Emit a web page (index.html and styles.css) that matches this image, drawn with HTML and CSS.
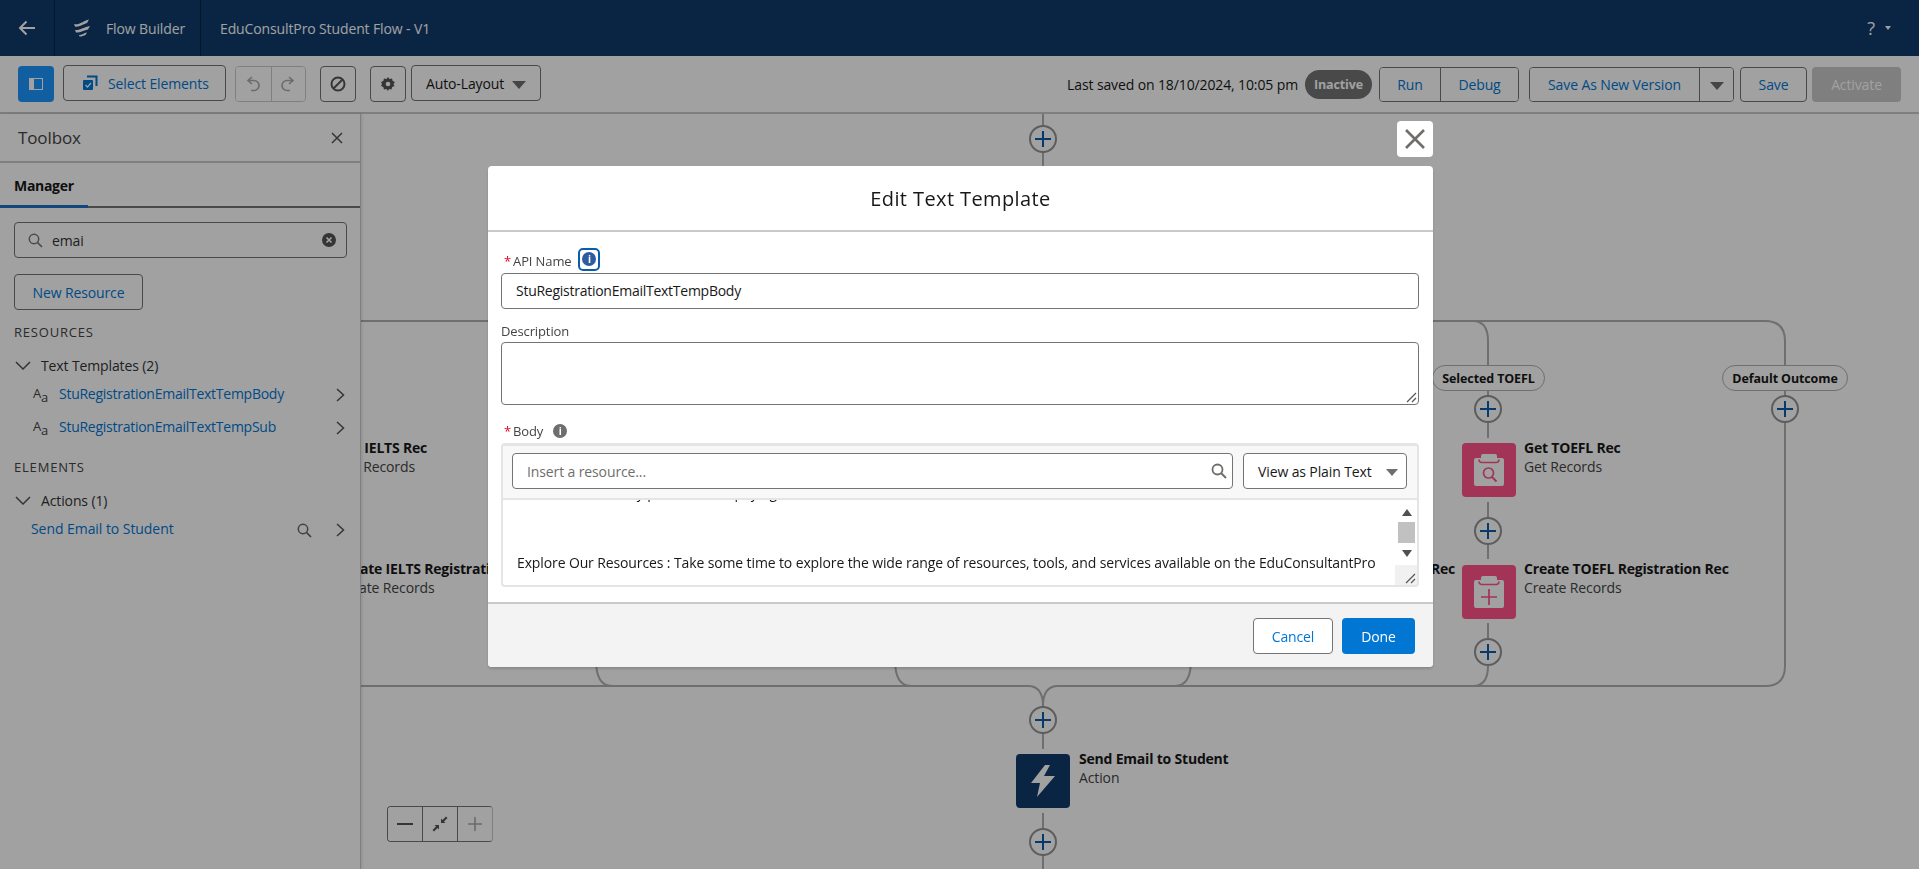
FILE: index.html
```html
<!DOCTYPE html>
<html lang="en">
<head>
    <meta charset="UTF-8">
    <title>Flow Builder</title>
    <link rel="stylesheet" href="styles.css">
</head>
<body>

    <!-- Top bar -->
    <header class="topbar">
        <div class="topbar-back">
            <svg width="18" height="16" viewBox="0 0 18 16"><path d="M17 8H2M8.500 1.500 2 8l6.500 6.500" fill="none" stroke="#fff" stroke-width="2"/></svg>
        </div>
        <div class="topbar-app">
            <svg width="18" height="18" viewBox="0 0 18 18"><path d="M1 5C6 6.500 10 2 16 0.500L14 4C10 5 6 8.500 2 7.500ZM2 11C7 11.500 11 8 17 7L15 10.500C11 11 7 14 3 13.500ZM6 16C9 16 11 14 14 13.500L12.500 16C10.500 16.500 8 18 6.500 17.500Z" fill="#fff"/></svg>
            <span>Flow Builder</span>
        </div>
        <div class="topbar-title">EduConsultPro Student Flow - V1</div>
        <div class="topbar-help">
            <span class="help-mark">?</span>
            <span class="help-caret"></span>
        </div>
    </header>

    <!-- Toolbar -->
    <div class="toolbar">
        <button class="icon-btn toggle-btn">
            <svg width="14" height="12" viewBox="0 0 14 12"><rect x="0.500" y="0.500" width="13" height="11" fill="none" stroke="#fff"/><rect x="1" y="1" width="4" height="10" fill="#fff"/></svg>
        </button>
        <button class="btn select-btn">
            <svg width="16" height="16" viewBox="0 0 16 16"><path d="M5 1.500h9.500V11" fill="none" stroke="#0176d3" stroke-width="2"/><rect x="1" y="5" width="10" height="10" rx="1" fill="#0176d3"/><path d="M3.500 10l2 2 3.500-4" fill="none" stroke="#fff" stroke-width="1.200"/></svg>
            Select Elements
        </button>
        <div class="btn-group undo-group">
            <button class="icon-btn">
                <svg width="14" height="16" viewBox="0 0 14 16"><path d="M6 1 2 4.500 6 8M2 4.500h6a4.500 4.500 0 0 1 0 10H5" fill="none" stroke="#aaa" stroke-width="1.600"/></svg>
            </button>
            <button class="icon-btn">
                <svg width="14" height="16" viewBox="0 0 14 16"><path d="M8 1l4 3.500L8 8M12 4.500H6a4.500 4.500 0 0 0 0 10h3" fill="none" stroke="#aaa" stroke-width="1.600"/></svg>
            </button>
        </div>
        <button class="icon-btn single-btn ban-btn">
            <svg width="16" height="16" viewBox="0 0 16 16"><circle cx="8" cy="8" r="6.500" fill="none" stroke="#555" stroke-width="2"/><path d="M12.500 3.500l-9 9" stroke="#555" stroke-width="2"/></svg>
        </button>
        <button class="icon-btn single-btn gear-btn">
            <svg width="16" height="16" viewBox="0 0 16 16"><path d="M8 1l1.500 2 2.500-.6.700 2.500 2.300 1.100L13.500 8l1 2-2.300 1.100-.7 2.500-2.500-.6L8 15l-1.500-2-2.500.6-.7-2.500L1 10l1-2-1-2 2.300-1.100.7-2.500 2.500.6Z" fill="#555"/><circle cx="8" cy="8" r="2.300" fill="#fff"/></svg>
        </button>
        <button class="btn layout-btn">Auto-Layout <span class="caret"></span></button>

        <div class="toolbar-right">
            <span class="saved-text">Last saved on 18/10/2024, 10:05 pm</span>
            <span class="status-pill">Inactive</span>
            <div class="btn-group run-group">
                <button class="btn-link run-btn">Run</button>
                <button class="btn-link debug-btn">Debug</button>
            </div>
            <div class="btn-group version-group">
                <button class="btn-link version-btn">Save As New Version</button>
                <button class="btn-link version-caret"><span class="caret"></span></button>
            </div>
            <button class="btn-link single-link save-btn">Save</button>
            <button class="activate-btn">Activate</button>
        </div>
    </div>

    <div class="workspace">
        <!-- Toolbox -->
        <aside class="sidebar">
            <div class="sidebar-head">
                <span>Toolbox</span>
                <svg width="12" height="12" viewBox="0 0 12 12"><path d="M1 1l10 10M11 1 1 11" stroke="#555" stroke-width="1.500"/></svg>
            </div>
            <div class="tabs"><span class="tab">Manager</span></div>
            <div class="search-box">
                <svg width="15" height="15" viewBox="0 0 15 15"><circle cx="6" cy="6" r="4.700" fill="none" stroke="#777" stroke-width="1.500"/><path d="M9.500 9.500 14 14" stroke="#777" stroke-width="1.700"/></svg>
                <span class="search-text">emai</span>
                <svg class="search-clear" width="14" height="14" viewBox="0 0 14 14"><circle cx="7" cy="7" r="7" fill="#555"/><path d="M4.500 4.500l5 5M9.500 4.500l-5 5" stroke="#fff" stroke-width="1.700"/></svg>
            </div>
            <button class="btn new-btn">New Resource</button>

            <div class="section-title">RESOURCES</div>
            <div class="tree-head">
                <svg width="16" height="9" viewBox="0 0 16 9"><path d="M1 1l7 7 7-7" fill="none" stroke="#555" stroke-width="1.500"/></svg>
                Text Templates (2)
            </div>
            <div class="tree-item">
                <span class="type-icon">A<small>a</small></span>
                <a>StuRegistrationEmailTextTempBody</a>
                <svg class="chev" width="9" height="14" viewBox="0 0 9 14"><path d="M1 1l6.500 6L1 13" fill="none" stroke="#555" stroke-width="1.500"/></svg>
            </div>
            <div class="tree-item">
                <span class="type-icon">A<small>a</small></span>
                <a>StuRegistrationEmailTextTempSub</a>
                <svg class="chev" width="9" height="14" viewBox="0 0 9 14"><path d="M1 1l6.500 6L1 13" fill="none" stroke="#555" stroke-width="1.500"/></svg>
            </div>

            <div class="section-title elements-title">ELEMENTS</div>
            <div class="tree-head">
                <svg width="16" height="9" viewBox="0 0 16 9"><path d="M1 1l7 7 7-7" fill="none" stroke="#555" stroke-width="1.500"/></svg>
                Actions (1)
            </div>
            <div class="tree-item action-item">
                <a>Send Email to Student</a>
                <svg class="item-search" width="15" height="15" viewBox="0 0 15 15"><circle cx="6" cy="6" r="4.700" fill="none" stroke="#666" stroke-width="1.500"/><path d="M9.500 9.500 14 14" stroke="#666" stroke-width="1.700"/></svg>
                <svg class="chev" width="9" height="14" viewBox="0 0 9 14"><path d="M1 1l6.500 6L1 13" fill="none" stroke="#555" stroke-width="1.500"/></svg>
            </div>
        </aside>

        <!-- Flow canvas -->
        <main class="canvas">
            <div class="flow-layer">
                <svg class="flow-lines" width="1919" height="869" viewBox="0 0 1919 869">
                    <g fill="none" stroke="#b0b0b0" stroke-width="2">
                        <path d="M1043 113V170"/>
                        <path d="M361 321H1765Q1785 321 1785 341V666Q1785 686 1765 686H1058Q1043 686 1043 706V749"/>
                        <path d="M361 686H1028Q1043 686 1043 706"/>
                        <path d="M1473 321Q1488 321 1488 341V438M1488 502V559M1488 623V666Q1488 686 1473 686"/>
                        <path d="M596 660Q596 686 612 686M895 660Q895 686 911 686M1191 660Q1191 686 1175 686"/>
                        <path d="M1043 813V869"/>
                    </g>
                    <g class="plus-btns">
                        <g transform="translate(1043 139)"><circle r="13"/><path d="M-8 0H8M0-8V8"/></g>
                        <g transform="translate(1488 409)"><circle r="13"/><path d="M-8 0H8M0-8V8"/></g>
                        <g transform="translate(1785 409)"><circle r="13"/><path d="M-8 0H8M0-8V8"/></g>
                        <g transform="translate(1488 531)"><circle r="13"/><path d="M-8 0H8M0-8V8"/></g>
                        <g transform="translate(1488 652)"><circle r="13"/><path d="M-8 0H8M0-8V8"/></g>
                        <g transform="translate(1043 720)"><circle r="13"/><path d="M-8 0H8M0-8V8"/></g>
                        <g transform="translate(1043 842)"><circle r="13"/><path d="M-8 0H8M0-8V8"/></g>
                    </g>
                </svg>

                <span class="outcome outcome-toefl">Selected TOEFL</span>
                <span class="outcome outcome-default">Default Outcome</span>

                <div class="node-text text-get-ielts"><b>Get IELTS Rec</b><span>Get Records</span></div>
                <div class="node-text text-create-ielts"><b>Create IELTS Registration Rec</b><span>Create Records</span></div>
                <div class="node-text text-create-mid"><b>Rec</b></div>

                <div class="node-icon pink icon-get-toefl">
                    <svg width="30" height="32" viewBox="0 0 30 32"><path d="M2 4h5V2a2 2 0 0 1 2-2h12a2 2 0 0 1 2 2v2h5a2 2 0 0 1 2 2v24a2 2 0 0 1-2 2H2a2 2 0 0 1-2-2V6a2 2 0 0 1 2-2Z" fill="#fff"/><path d="M5 5.500c0 2 1 3 3 3h14c2 0 3-1 3-3" fill="none" stroke="#ff538a" stroke-width="1.500"/><circle cx="14.500" cy="19" r="5" fill="none" stroke="#ff538a" stroke-width="1.700"/><path d="M18 23l4.500 4.500" stroke="#ff538a" stroke-width="2"/></svg>
                </div>
                <div class="node-text text-get-toefl"><b>Get TOEFL Rec</b><span>Get Records</span></div>

                <div class="node-icon pink icon-create-toefl">
                    <svg width="30" height="32" viewBox="0 0 30 32"><path d="M2 4h5V2a2 2 0 0 1 2-2h12a2 2 0 0 1 2 2v2h5a2 2 0 0 1 2 2v24a2 2 0 0 1-2 2H2a2 2 0 0 1-2-2V6a2 2 0 0 1 2-2Z" fill="#fff"/><path d="M5 5.500c0 2 1 3 3 3h14c2 0 3-1 3-3" fill="none" stroke="#ff538a" stroke-width="1.500"/><path d="M15 13v16M7 21h16" stroke="#ff538a" stroke-width="1.700"/></svg>
                </div>
                <div class="node-text text-create-toefl"><b>Create TOEFL Registration Rec</b><span>Create Records</span></div>

                <div class="node-icon navy icon-action">
                    <svg width="24" height="32" viewBox="0 0 24 32"><path d="M14 0 0 18h9L6 32l18-21H13l6-11Z" fill="#fff"/></svg>
                </div>
                <div class="node-text text-action"><b>Send Email to Student</b><span>Action</span></div>
            </div>

            <div class="zoom-controls">
                <button>
                    <svg width="16" height="2" viewBox="0 0 16 2"><path d="M0 1h16" stroke="#555" stroke-width="2"/></svg>
                </button>
                <button>
                    <svg width="16" height="16" viewBox="0 0 16 16"><path d="M9 7V2.500L10.500 4 14 .5 15.500 2 12 5.500 13.500 7ZM7 9v4.500L5.500 12 2 15.500.5 14 4 10.500 2.500 9Z" fill="#555"/></svg>
                </button>
                <button class="zoom-off">
                    <svg width="14" height="14" viewBox="0 0 14 14"><path d="M0 7h14M7 0v14" stroke="#aaa" stroke-width="1.600"/></svg>
                </button>
            </div>
        </main>
    </div>

    <!-- Dialog -->
    <div class="backdrop">
        <div class="modal">
            <button class="modal-close">
                <svg width="20" height="20" viewBox="0 0 20 20"><path d="M1 1l18 18M19 1 1 19" stroke="#706e6b" stroke-width="2.600"/></svg>
            </button>
            <div class="modal-head">Edit Text Template</div>
            <div class="modal-body">
                <div class="field-label api-label">
                    <span><i>*</i>API Name</span>
                    <span class="info-focus"><span class="info-dot info-blue">i</span></span>
                </div>
                <div class="text-input name-input">StuRegistrationEmailTextTempBody</div>

                <div class="field-label desc-label">Description</div>
                <div class="text-input desc-input">
                    <svg class="grip" width="11" height="11" viewBox="0 0 11 11"><path d="M1 10 10 1M6 10l4-4" stroke="#555" stroke-width="1.200"/></svg>
                </div>

                <div class="field-label body-label">
                    <span><i>*</i>Body</span>
                    <span class="info-dot">i</span>
                </div>
                <div class="editor">
                    <div class="editor-bar">
                        <div class="text-input resource-input">
                            <span>Insert a resource...</span>
                            <svg width="16" height="16" viewBox="0 0 16 16"><circle cx="6.500" cy="6.500" r="5" fill="none" stroke="#706e6b" stroke-width="1.800"/><path d="M10 10l5 5" stroke="#706e6b" stroke-width="2"/></svg>
                        </div>
                        <div class="text-input view-select">View as Plain Text <span class="caret"></span></div>
                    </div>
                    <div class="editor-main">
                        <div class="editor-text">
                            <p class="cut-line">Read the notes fully proceed with paying</p>
                            <p class="next-line">Explore Our Resources : Take some time to explore the wide range of resources, tools, and services available on the EduConsultantPro</p>
                        </div>
                        <div class="scroll">
                            <div class="scroll-arrow up"></div>
                            <div class="scroll-thumb"></div>
                            <div class="scroll-arrow down"></div>
                            <div class="scroll-corner">
                                <svg width="11" height="11" viewBox="0 0 11 11"><path d="M1 10 10 1M6 10l4-4" stroke="#555" stroke-width="1.200"/></svg>
                            </div>
                        </div>
                    </div>
                </div>
            </div>
            <div class="modal-foot">
                <button class="cancel-btn">Cancel</button>
                <button class="done-btn">Done</button>
            </div>
        </div>
    </div>

</body>
</html>
```

FILE: styles.css
```css
* {
    box-sizing: border-box;
}

html, body {
    height: 100%;
}

body {
    margin: 0;
    background: #fff;
    color: #181818;
    font-family: "Open Sans", "Noto Sans", sans-serif;
    font-size: 14px;
    letter-spacing: -0.12px;
    overflow: hidden;
}

button {
    font: inherit;
    letter-spacing: inherit;
    background: #fff;
    cursor: pointer;
    padding: 0;
}

svg {
    display: block;
    flex: none;
}

/* Top bar */
.topbar {
    display: flex;
    align-items: center;
    height: 56px;
    background: #103b6d;
    color: #fff;
}

.topbar-back {
    display: flex;
    align-items: center;
    width: 55px;
    height: 100%;
    padding-left: 18px;
    border-right: 1px solid #04234a;
}

.topbar-app {
    display: flex;
    align-items: center;
    gap: 15px;
    width: 146px;
    height: 100%;
    padding-left: 18px;
    border-right: 1px solid #04234a;
}

.topbar-title {
    padding-left: 19px;
}

.topbar-help {
    display: flex;
    align-items: center;
    gap: 10px;
    margin-left: auto;
    padding-right: 28px;
}

.help-mark {
    font-size: 18px;
}

.help-caret {
    border-left: 3px solid transparent;
    border-right: 3px solid transparent;
    border-top: 4px solid #fff;
}

/* Toolbar */
.toolbar {
    display: flex;
    align-items: center;
    height: 58px;
    padding: 0 18px;
    border-bottom: 2px solid #c9c9c9;
}

.btn, .icon-btn.single-btn {
    height: 36px;
    border: 1px solid #747474;
    border-radius: 4px;
}

.btn {
    display: flex;
    align-items: center;
    color: #0176d3;
}

.icon-btn {
    display: flex;
    align-items: center;
    justify-content: center;
    width: 36px;
    height: 36px;
}

.toggle-btn {
    border: none;
    border-radius: 4px;
    background: #1b96ff;
}

.select-btn {
    gap: 10px;
    width: 163px;
    margin: 0 0 2px 9px;
    padding-left: 18px;
}

.btn-group {
    display: flex;
    border: 1px solid #747474;
    border-radius: 4px;
    overflow: hidden;
}

.btn-group button {
    border: none;
    height: 100%;
}

.undo-group {
    width: 71px;
    height: 36px;
    margin-left: 9px;
    border-color: #c9c9c9;
}

.undo-group .icon-btn {
    width: 50%;
}

.undo-group .icon-btn + .icon-btn {
    border-left: 1px solid #c9c9c9;
}

.ban-btn {
    margin-left: 14px;
}

.gear-btn {
    margin-left: 14px;
}

.layout-btn {
    justify-content: space-between;
    width: 130px;
    margin: 0 0 2px 5px;
    padding: 0 14px;
    color: #181818;
}

.caret {
    display: inline-block;
    border-left: 7px solid transparent;
    border-right: 7px solid transparent;
    border-top: 8px solid #706e6b;
}

.layout-btn .caret {
    margin-top: 3px;
}

.toolbar-right {
    display: flex;
    align-items: center;
    margin-left: auto;
}

.saved-text {
    margin-right: 7px;
}

.status-pill {
    display: flex;
    align-items: center;
    justify-content: center;
    width: 67px;
    height: 29px;
    border-radius: 15px;
    background: #747474;
    color: #fff;
    font-size: 12.500px;
    font-weight: 700;
}

.btn-link {
    color: #0176d3;
    text-align: center;
}

.run-group {
    width: 140px;
    height: 35px;
    margin-left: 7px;
}

.run-btn {
    width: 61px;
    border-right: 1px solid #747474 !important;
}

.debug-btn {
    flex: 1;
}

.version-group {
    width: 205px;
    height: 35px;
    margin-left: 10px;
}

.version-btn {
    width: 170px;
    border-right: 1px solid #747474 !important;
}

.version-caret {
    flex: 1;
}

.single-link {
    width: 67px;
    height: 35px;
    margin-left: 6px;
    border: 1px solid #747474;
    border-radius: 4px;
}

.activate-btn {
    width: 89px;
    height: 35px;
    margin-left: 5px;
    border: none;
    border-radius: 4px;
    background: #c9c9c9;
    color: #fff;
}

/* Workspace */
.workspace {
    display: flex;
    height: 755px;
}

.sidebar {
    flex: none;
    width: 361px;
    border-right: 1px solid #c9c9c9;
    box-shadow: 1px 0 3px rgba(0, 0, 0, 0.12);
    background: #fff;
    position: relative;
    z-index: 2;
}

.sidebar-head {
    display: flex;
    align-items: center;
    justify-content: space-between;
    height: 49px;
    padding: 0 17px 0 18px;
    border-bottom: 2px solid #c9c9c9;
    font-size: 17px;
    color: #444;
}

.tabs {
    height: 45px;
    border-bottom: 2px solid #747474;
}

.tab {
    display: block;
    width: 88px;
    height: 45px;
    padding: 13px 0 0 14px;
    border-bottom: 3px solid #1b70c8;
    font-weight: 700;
    letter-spacing: -0.3px;
}

.search-box {
    display: flex;
    align-items: center;
    width: 333px;
    height: 36px;
    margin: 14px 0 0 14px;
    padding: 0 10px 0 13px;
    border: 1px solid #747474;
    border-radius: 4px;
}

.search-text {
    margin-left: 9px;
    color: #333;
}

.search-clear {
    margin-left: auto;
}

.new-btn {
    justify-content: center;
    width: 129px;
    margin: 16px 0 0 14px;
}

.section-title {
    margin: 13px 0 0 14px;
    font-size: 13px;
    line-height: 18px;
    letter-spacing: 0.8px;
    color: #444;
}

.elements-title {
    margin-top: 22px;
}

.tree-head {
    display: flex;
    align-items: center;
    gap: 10px;
    height: 20px;
    margin: 14px 0 0 15px;
    color: #333;
}

.tree-item {
    display: flex;
    align-items: center;
    height: 20px;
    margin-top: 13px;
    padding: 0 15px 0 33px;
}

.tree-head + .tree-item {
    margin-top: 8px;
}

.tree-item a {
    color: #0176d3;
    letter-spacing: -0.26px;
}

.chev {
    margin-left: auto;
    margin-top: 4px;
}

.type-icon {
    width: 26px;
    font-size: 13px;
    color: #444;
}

.type-icon small {
    font-size: 13px;
    position: relative;
    top: 4px;
}

.action-item {
    padding-left: 31px;
}

.action-item a {
    letter-spacing: -0.06px;
}

.item-search {
    margin-left: auto;
    margin-top: 4px;
}

.action-item .chev {
    margin-left: 24px;
}

/* Canvas */
.canvas {
    flex: 1;
    position: relative;
    overflow: hidden;
}

.flow-layer {
    position: absolute;
    left: -361px;
    top: -114px;
    width: 1919px;
    height: 869px;
}

.flow-lines {
    position: absolute;
    left: 0;
    top: 0;
}

.plus-btns circle {
    fill: #fff;
    stroke: #949494;
    stroke-width: 2;
}

.plus-btns path {
    fill: none;
    stroke: #0b5cab;
    stroke-width: 2;
}

.outcome {
    position: absolute;
    top: 365px;
    display: flex;
    align-items: center;
    justify-content: center;
    height: 26px;
    border: 1px solid #b0b0b0;
    border-radius: 13px;
    background: #fff;
    font-size: 12.500px;
    font-weight: 700;
}

.outcome-toefl {
    left: 1432px;
    width: 113px;
}

.outcome-default {
    left: 1722px;
    width: 126px;
}

.node-icon {
    position: absolute;
    display: flex;
    align-items: center;
    justify-content: center;
    width: 54px;
    height: 54px;
    border-radius: 4px;
}

.pink {
    background: #ff538a;
}

.navy {
    background: #103b6d;
}

.node-text {
    position: absolute;
    line-height: 18px;
    white-space: nowrap;
}

.node-text b, .node-text span {
    display: block;
}

.node-text b {
    letter-spacing: -0.2px;
}

.node-text span {
    margin-top: 1px;
    color: #444;
}

.icon-get-toefl {
    left: 1462px;
    top: 443px;
}

.icon-create-toefl {
    left: 1462px;
    top: 565px;
}

.icon-action {
    left: 1016px;
    top: 754px;
}

.text-get-toefl {
    left: 1524px;
    top: 439px;
}

.text-create-toefl {
    left: 1524px;
    top: 560px;
}

.text-action {
    left: 1079px;
    top: 750px;
}

.text-get-ielts {
    left: 337px;
    top: 439px;
}

.text-create-ielts {
    left: 337px;
    top: 560px;
}

.text-create-mid {
    right: 464px;
    top: 560px;
}

.zoom-controls {
    position: absolute;
    left: 26px;
    top: 692px;
    display: flex;
    width: 106px;
    height: 36px;
    border: 1px solid #747474;
    border-right-color: #c9c9c9;
    border-radius: 4px;
    overflow: hidden;
}

.zoom-controls button {
    display: flex;
    align-items: center;
    justify-content: center;
    width: 35px;
    border: none;
    border-right: 1px solid #747474;
}

.zoom-controls .zoom-off {
    flex: 1;
    border-right: none;
}

/* Dialog */
.backdrop {
    position: fixed;
    left: 0;
    top: 0;
    width: 100%;
    height: 100%;
    z-index: 10;
    display: flex;
    justify-content: center;
    padding: 166px 0 0 2px;
    background: rgba(0, 0, 0, 0.37);
}

.modal {
    position: relative;
    width: 945px;
    height: 501px;
    border-radius: 4px;
    background: #fff;
    box-shadow: 0 2px 3px rgba(0, 0, 0, 0.16);
}

.modal-close {
    position: absolute;
    right: 0;
    top: -45px;
    display: flex;
    align-items: center;
    justify-content: center;
    width: 36px;
    height: 36px;
    border: none;
    border-radius: 4px;
}

.modal-head {
    display: flex;
    align-items: center;
    justify-content: center;
    height: 66px;
    border-bottom: 2px solid #c9c9c9;
    font-size: 20px;
    letter-spacing: 0.4px;
}

.modal-body {
    height: 370px;
    padding: 0 14px 0 13px;
}

.field-label {
    color: #444;
    font-size: 13px;
    line-height: 18px;
}

.field-label i {
    margin-right: 2px;
    color: #ea001e;
    font-style: normal;
}

.api-label {
    display: flex;
    align-items: center;
    gap: 7px;
    height: 41px;
    padding: 16px 0 0 3px;
}

.info-focus {
    display: flex;
    align-items: center;
    justify-content: center;
    width: 22px;
    height: 23px;
    margin-top: -3px;
    border: 2px solid #0b5cab;
    border-radius: 5px;
}

.info-dot {
    display: flex;
    align-items: center;
    justify-content: center;
    width: 14px;
    height: 14px;
    border-radius: 50%;
    background: #706e6b;
    color: #fff;
    font-size: 10px;
    font-weight: 700;
}

.info-blue {
    background: #2f5c9e;
}

.text-input {
    position: relative;
    border: 1px solid #747474;
    border-radius: 4px;
    background: #fff;
}

.name-input {
    height: 36px;
    padding: 0 14px;
    line-height: 34px;
    letter-spacing: -0.26px;
}

.desc-label {
    margin-top: 13px;
}

.desc-input {
    height: 63px;
    margin-top: 2px;
}

.grip {
    position: absolute;
    right: 1px;
    bottom: 1px;
}

.body-label {
    display: flex;
    align-items: center;
    gap: 10px;
    height: 18px;
    margin-top: 17px;
    padding-left: 3px;
}

.editor {
    height: 144px;
    margin-top: 3px;
    border: 2px solid #e5e5e5;
    border-top-width: 3px;
    border-radius: 4px;
    overflow: hidden;
}

.editor-bar {
    display: flex;
    align-items: flex-start;
    gap: 10px;
    height: 54px;
    padding: 7px 10px 0 9px;
    border-bottom: 2px solid #e5e5e5;
    background: #f8f8f8;
}

.resource-input {
    display: flex;
    align-items: center;
    justify-content: space-between;
    width: 721px;
    height: 36px;
    padding: 0 5px 0 14px;
    color: #706e6b;
}

.view-select {
    display: flex;
    align-items: center;
    justify-content: space-between;
    flex: 1;
    height: 36px;
    padding: 0 8px 0 14px;
}

.view-select .caret {
    margin-top: 3px;
    border-left-width: 6px;
    border-right-width: 6px;
    border-top-width: 7px;
}

.editor-main {
    display: flex;
    height: 85px;
}

.editor-text {
    flex: 1;
    padding-left: 14px;
    overflow: hidden;
    white-space: nowrap;
}

.editor-text p {
    margin: 0;
    line-height: 18px;
}

.cut-line {
    margin-top: -16px !important;
}

.next-line {
    margin-top: 52px !important;
}

.scroll {
    position: relative;
    flex: none;
    width: 22px;
    padding-top: 9px;
}

.scroll-arrow {
    width: 0;
    margin-left: 7px;
    border-left: 5px solid transparent;
    border-right: 5px solid transparent;
}

.scroll-arrow.up {
    border-bottom: 7px solid #505050;
}

.scroll-arrow.down {
    border-top: 7px solid #505050;
}

.scroll-thumb {
    width: 17px;
    height: 21px;
    margin: 6px 0 7px 3px;
    background: #c1c1c1;
}

.scroll-corner {
    position: absolute;
    left: 0;
    bottom: 0;
    width: 22px;
    height: 20px;
    background: #f1f1f1;
}

.scroll-corner svg {
    position: absolute;
    right: 1px;
    bottom: 1px;
}

.modal-foot {
    display: flex;
    justify-content: flex-end;
    gap: 9px;
    height: 65px;
    padding: 14px 18px 0 0;
    border-top: 2px solid #c9c9c9;
    border-radius: 0 0 4px 4px;
    background: #f3f3f3;
}

.cancel-btn, .done-btn {
    height: 36px;
    border-radius: 4px;
}

.cancel-btn {
    width: 80px;
    border: 1px solid #747474;
    color: #0176d3;
}

.done-btn {
    width: 73px;
    border: none;
    background: #0176d3;
    color: #fff;
}
```
